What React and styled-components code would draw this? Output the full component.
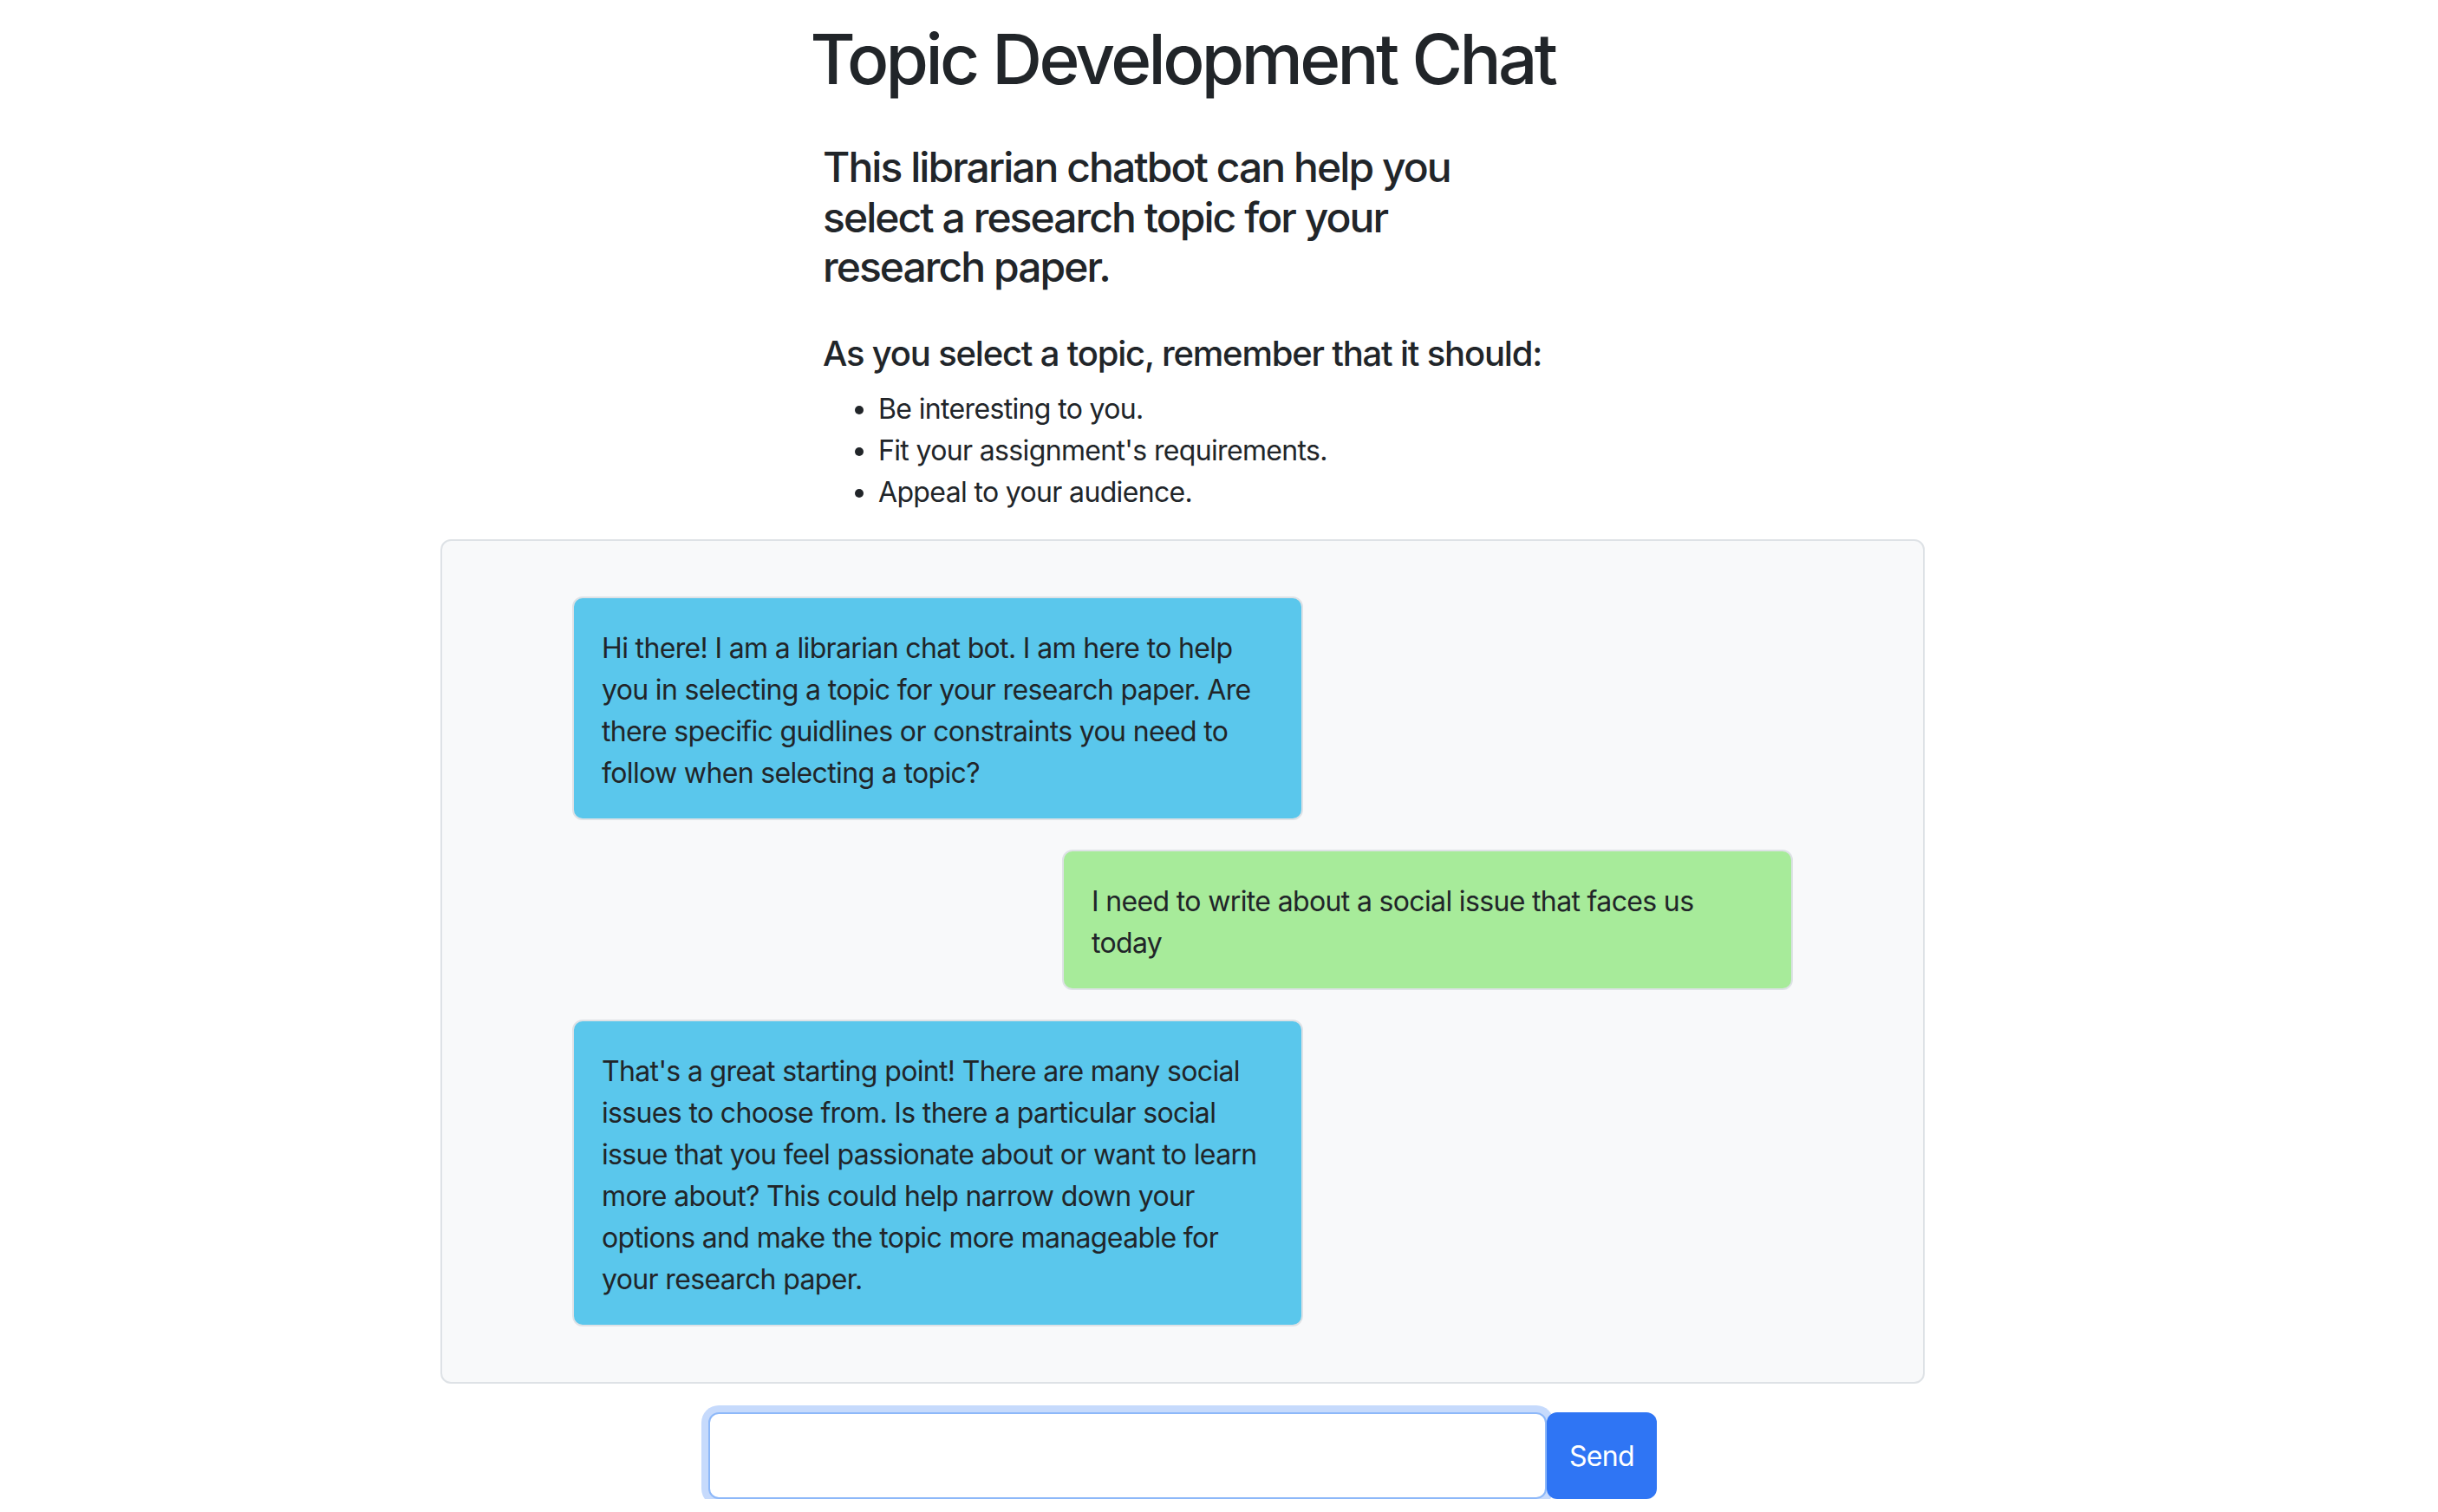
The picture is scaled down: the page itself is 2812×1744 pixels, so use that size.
import React from "react";
import styled, { createGlobalStyle } from "styled-components";

const GlobalStyle = createGlobalStyle`
  html, body {
    margin: 0;
    padding: 0;
    background: #ffffff;
  }
  body {
    font-family: Inter, "Noto Sans", "Liberation Sans", sans-serif;
    font-size: 32px;
    line-height: 48px;
    letter-spacing: -0.65px;
    color: #212529;
  }
  * {
    box-sizing: border-box;
  }
`;

const Page = styled.div`
  width: 2728px;
  padding-top: 20px;
  display: flex;
  flex-direction: column;
  align-items: center;
`;

const Title = styled.h1`
  margin: 0 0 48px;
  font-size: 80px;
  line-height: 96px;
  font-weight: 500;
  letter-spacing: -3.6px;
`;

const Intro = styled.div`
  width: 830px;
`;

const Lead = styled.h4`
  margin: 0 0 47px;
  font-size: 48px;
  line-height: 57.6px;
  font-weight: 500;
  letter-spacing: -1.95px;
`;

const Subhead = styled.h5`
  margin: 0 0 16px;
  font-size: 40px;
  line-height: 48px;
  font-weight: 500;
  letter-spacing: -1.2px;
  white-space: nowrap;
`;

const Checklist = styled.ul`
  margin: 0 0 30px;
  padding-left: 64px;
`;

const ChatBox = styled.div`
  width: 1712px;
  padding: 64px 150px;
  background: #f8f9fa;
  border: 2px solid #dee2e6;
  border-radius: 12px;
  display: flex;
  flex-direction: column;
  gap: 34px;
`;

const Bubble = styled.div`
  width: 843px;
  padding: 34px 32px 28px;
  border: 2px solid #dee2e6;
  border-radius: 12px;
  align-self: ${(p) => (p.$fromUser ? "flex-end" : "flex-start")};
  background: ${(p) => (p.$fromUser ? "#a7eb9a" : "#5ac7ec")};
`;

const Composer = styled.form`
  margin-top: 33px;
  display: flex;
`;

const MessageInput = styled.input`
  width: 967px;
  height: 100px;
  padding: 0 32px;
  font: inherit;
  color: #212529;
  background: #ffffff;
  border: 2px solid #8db8f9;
  border-radius: 12px;
  box-shadow: 0 0 0 8px #c6dafc;
  outline: none;
`;

const SendButton = styled.button`
  width: 127px;
  height: 100px;
  position: relative;
  padding-top: 4px;
  font: inherit;
  letter-spacing: -0.65px;
  color: #ffffff;
  background: #2f75f4;
  border: none;
  border-radius: 12px;
`;

const messages = [
  {
    user: false,
    text: "Hi there! I am a librarian chat bot. I am here to help you in selecting a topic for your research paper. Are there specific guidlines or constraints you need to follow when selecting a topic?",
  },
  { user: true, text: "I need to write about a social issue that faces us today" },
  {
    user: false,
    text: "That's a great starting point! There are many social issues to choose from. Is there a particular social issue that you feel passionate about or want to learn more about? This could help narrow down your options and make the topic more manageable for your research paper.",
  },
];

const App = () => {
  return (
    <Page>
      <GlobalStyle />
      <Title>Topic Development Chat</Title>
      <Intro>
        <Lead>This librarian chatbot can help you select a research topic for your research paper.</Lead>
        <Subhead>As you select a topic, remember that it should:</Subhead>
        <Checklist>
          <li>Be interesting to you.</li>
          <li>Fit your assignment's requirements.</li>
          <li>Appeal to your audience.</li>
        </Checklist>
      </Intro>
      <ChatBox>
        {messages.map((m, i) => (
          <Bubble key={i} $fromUser={m.user}>{m.text}</Bubble>
        ))}
      </ChatBox>
      <Composer onSubmit={(e) => e.preventDefault()}>
        <MessageInput type="text" />
        <SendButton type="submit">Send</SendButton>
      </Composer>
    </Page>
  );
};

export default App;
